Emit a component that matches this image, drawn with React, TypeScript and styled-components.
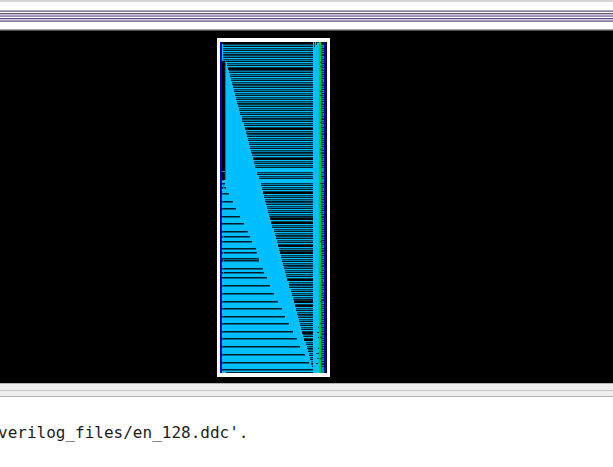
import React from "react";
import styled, { createGlobalStyle } from "styled-components";

const GlobalStyle = createGlobalStyle`
  html, body, #root { height: 100%; margin: 0; }
  body { background: #fff; overflow: hidden; }
`;

const Window = styled.div`
  display: flex;
  flex-direction: column;
  height: 100%;
  background: #fff;
`;

const TopBar = styled.header`
  display: flex;
  flex-direction: column;
  padding: 8px 0 7px;
  border-top: 2px solid #d4d4d4;
`;

const Stripe = styled.div<{ $color: string }>`
  height: 1px;
  background: ${(p) => p.$color};
`;

const Canvas = styled.main`
  flex: 1;
  min-height: 0;
  display: flex;
  justify-content: center;
  padding: 7px 66px 6px 0;
  background: #000;
  border-top: 2px ridge #a4a4a4;
`;

const Schematic = styled.svg`
  display: block;
  height: 100%;
  aspect-ratio: 113 / 339;
`;

const Splitter = styled.div`
  display: flex;
  flex-direction: column;
  justify-content: center;
  height: 12px;
  background: #efefef;
  border-top: 1px solid #b4b4b4;
  border-bottom: 1px solid #b4b4b4;
`;

const Console = styled.section`
  height: 70px;
  padding-top: 26px;
  box-sizing: border-box;
  overflow: hidden;
`;

const LogLine = styled.p`
  margin: 0 0 0 -2px;
  font: 16px/20px "DejaVu Sans Mono", monospace;
  color: #1c1c1c;
  white-space: pre;
`;

const titleStripes = [
  "#b0a8c0", "#8d85a4", "#ffffff", "#66587f", "#c5bcd7", "#aaa0c0",
  "#9a8eb0", "#ffffff", "#5d4785", "#d0c6e2", "#aaa0c0", "#8c7ba0",
];

// Vertical positions and right ends of the nets on the left side.
const leftNets = [
  [183, 225], [187, 226], [193, 229], [201, 233], [208, 236], [216, 240],
  [223, 244], [231, 248], [236, 250], [241, 252], [248, 256], [252, 257],
  [258, 259], [260, 259], [268, 263], [272, 264], [277, 267], [285, 270],
  [293, 274], [301, 278], [308, 282], [316, 285], [323, 289], [331, 293],
  [338, 297], [346, 300], [354, 305], [362, 309], [369, 313],
];
const denseGaps = [68, 100, 129, 157, 175, 191, 218, 222, 246, 251, 280, 301, 306, 332, 338];
const solidBands = [[169, 172], [180, 181]];

const rows = Array.from({ length: 86 }, (_, i) => Math.round(45 + i * 3.77)).filter(
  (y) => y < 367 && !solidBands.some(([a, b]) => y >= a && y <= b),
);
const edge = (y: number) => (y < 61 ? 223 : Math.round(226 + (y - 62) * 0.283));

function Wiring() {
  return (
    <Schematic viewBox="217 38 113 339" role="img" aria-label="Schematic" shapeRendering="crispEdges">
      <rect x="217" y="38" width="113" height="339" fill="#fff" />
      <rect x="220" y="42" width="107" height="331" fill="#000" />
      <rect x="222" y="44" width="91" height="329" fill="#00bfff" />
      <rect x="313" y="42" width="6" height="331" fill="#00bfff" />
      <rect x="321" y="44" width="3" height="329" fill="#0092c4" />
      {rows.map((y, i) => {
        const x = edge(y);
        const thick = denseGaps.some((g) => Math.abs(g - y) < 2);
        const w = Math.max(0, 313 - x);
        return (
          <g key={y}>
            <rect x={x} y={y - 1} width={w} height="1" fill="#003c50" />
            <rect x={x} y={y} width={w} height="1" fill="#0080ab" />
            <rect x={x} y={y + 1} width={w} height="1" fill="#001b25" />
            {thick && <rect x={x} y={y} width={w} height="2" fill="#000" />}
            <rect x="321" y={y - 1} width="3" height="1" fill="#00141b" />
            <rect x="321" y={y + 1} width={i % 3 ? 3 : 2} height="1" fill="#003c50" />
          </g>
        );
      })}
      <rect x="222" y="61" width="3" height="119" fill="#000" />
      <rect x="225" y="61" width="1" height="119" fill="#007ca6" />
      <rect x="222" y="171" width="3" height="1" fill="#0097ca" />
      {leftNets.map(([y, end]) => (
        <g key={y}>
          <rect x="222" y={y + 1} width={end - 222} height="1" fill="#006b90" />
          <rect x="222" y={y} width={end - 222} height="1" fill="#001c27" />
        </g>
      ))}
      <rect x="226" y="372" width="87" height="1" fill="#00222e" />
      <path d="M314 42h1v5h-1zM316 42h3v1h-2v2h-1z" fill="#004059" />
      <path d="M318 327h2v1h-2zM317 332h2v1h-2zM318 337h2v1h-2zM318 348h1v1h-1zM316 353h3v1h-3zM317 358h3v1h-3zM316 363h2v1h-2zM311 355h2v1h-2zM311 359h2v1h-2zM311 363h1v2h-1z" fill="#00222e" />
      <rect x="319" y="42" width="2" height="331" fill="#00d000" />
      <rect x="321" y="42" width="1" height="331" fill="#008b38" fillOpacity="0.6" />
      {[62, 66, 91, 95, 122, 149, 153, 183, 212, 241, 272, 301, 323, 337, 358].map((y) => (
        <rect key={y} x="320" y={y} width="2" height="1" fill="#064b22" />
      ))}
      <path d="M222 180h2v1h-2zM223 185h1v4h-1zM223 236h1v2h-1zM223 252h1v2h-1zM223 260h1v2h-1zM223 272h1v2h-1z" fill="#00a43a" />
      <rect x="220" y="42" width="2" height="331" fill="#0000c0" />
      <rect x="324" y="42" width="2" height="331" fill="#0000b4" />
    </Schematic>
  );
}

export default function App() {
  return (
    <>
      <GlobalStyle />
      <Window>
        <TopBar>
          {titleStripes.map((color, i) => (
            <Stripe key={i} $color={color} />
          ))}
        </TopBar>
        <Canvas>
          <Wiring />
        </Canvas>
        <Splitter>
          <Stripe $color="#c5c5c5" />
        </Splitter>
        <Console>
          <LogLine>verilog_files/en_128.ddc'.</LogLine>
        </Console>
      </Window>
    </>
  );
}
